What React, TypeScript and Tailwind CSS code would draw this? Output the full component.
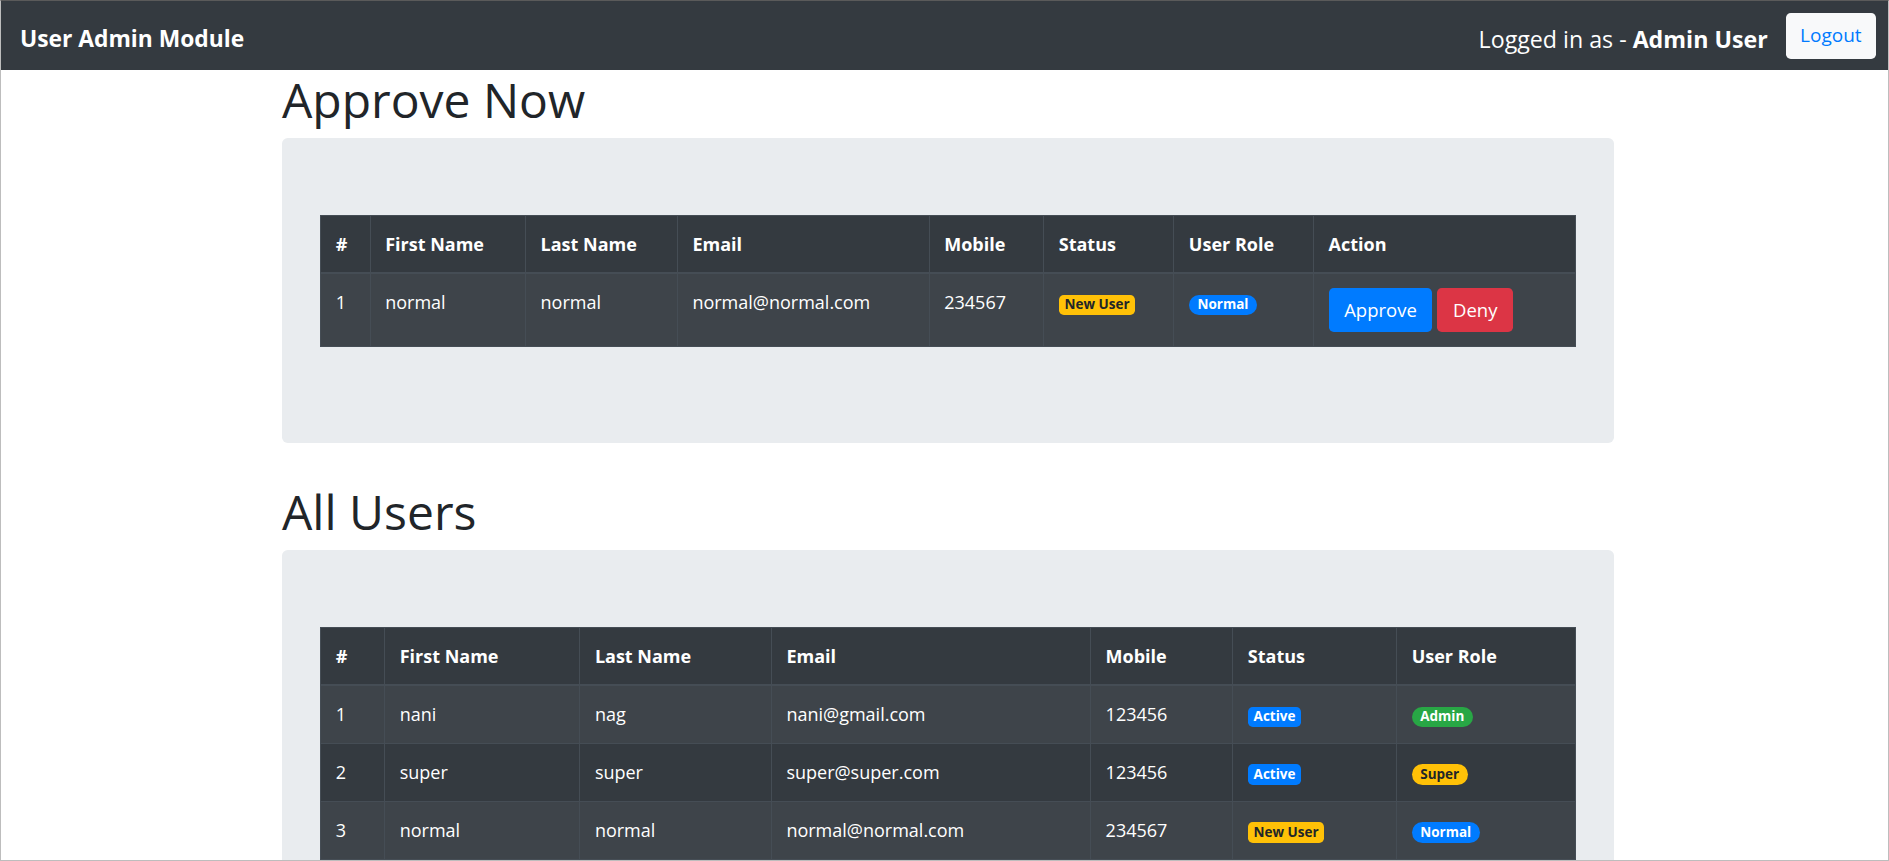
import React from "react";

type Badge = { text: string; cls: string; pill?: boolean };

const newUser: Badge = { text: "New User", cls: "bg-[#ffc107] text-[#212529]" };
const active: Badge = { text: "Active", cls: "bg-[#007bff] text-white" };
const normal: Badge = { text: "Normal", cls: "bg-[#007bff] text-white", pill: true };
const admin: Badge = { text: "Admin", cls: "bg-[#28a745] text-white", pill: true };
const superB: Badge = { text: "Super", cls: "bg-[#ffc107] text-[#212529]", pill: true };

function Pill({ b }: { b: Badge }) {
  return (
    <span
      className={
        "inline-block align-baseline font-bold text-[13.5px] leading-none py-[3.6px] " +
        (b.pill ? "px-[8.6px] rounded-full " : "px-[5.8px] rounded-[4.8px] ") +
        b.cls
      }
    >
      {b.text}
    </span>
  );
}

const th = "text-left font-bold px-[14.4px] pt-[14px] pb-[13.6px] border border-[#454d55] border-b-2 align-bottom leading-[28.8px]";
const td = "text-left px-[14.4px] py-[14px] border border-[#454d55] align-top leading-[28.8px]";

function Heading({ children }: { children: React.ReactNode }) {
  return (
    <h1 className="text-[48px] leading-[57.6px] font-medium text-[#212529] mb-[9.6px] pt-[1px]">{children}</h1>
  );
}

export default function App() {
  const approveCols = [49.4, 155.4, 151.8, 251.8, 114.5, 130.1, 139.7, 261.4];
  const allCols = [63.9, 195.2, 191.5, 319.2, 142.2, 163.8, 178.3];
  const users = [
    { id: 1, first: "nani", last: "nag", email: "nani@gmail.com", mobile: "123456", status: active, role: admin },
    { id: 2, first: "super", last: "super", email: "super@super.com", mobile: "123456", status: active, role: superB },
    { id: 3, first: "normal", last: "normal", email: "normal@normal.com", mobile: "234567", status: newUser, role: normal },
  ];

  return (
    <div className="h-[861px] overflow-hidden border border-[#bdbdbd] border-t-[#5a5a5a] bg-white font-['Open_Sans',sans-serif] text-[18px] leading-[28.8px] text-[#212529]">
      <nav className="h-[69px] bg-[#343a40] flex items-center justify-between pl-[19px] pr-[12px]">
        <div className="text-white font-bold text-[22.8px] leading-[36px] pt-[6px]">User Admin Module</div>
        <div className="flex items-center">
          <span className="text-white text-[23.2px] leading-[36px] pt-[6px]">
            Logged in as - <span className="font-bold">Admin User</span>
          </span>
          <button className="ml-[18px] h-[46px] px-[14.4px] rounded-[4.8px] bg-[#f8f9fa] text-[#007bff] text-[19px]">
            Logout
          </button>
        </div>
      </nav>

      <div className="w-[1332px] ml-[281px]">
        <Heading>Approve Now</Heading>
        <div className="bg-[#e9ecef] rounded-[5.76px] px-[38.4px] py-[76.8px] mb-[38.4px]">
          <table className="w-full table-fixed border-collapse bg-[#343a40] text-white mb-[19.2px]">
            <colgroup>
              {approveCols.map((w, i) => (
                <col key={i} style={{ width: w }} />
              ))}
            </colgroup>
            <thead>
              <tr>
                {["#", "First Name", "Last Name", "Email", "Mobile", "Status", "User Role", "Action"].map((h) => (
                  <th key={h} className={th}>{h}</th>
                ))}
              </tr>
            </thead>
            <tbody>
              <tr className="bg-[#3e444a]">
                <td className={td}>1</td>
                <td className={td}>normal</td>
                <td className={td}>normal</td>
                <td className={td}>normal@normal.com</td>
                <td className={td}>234567</td>
                <td className={td}><Pill b={newUser} /></td>
                <td className={td}><Pill b={normal} /></td>
                <td className={td}>
                  <div className="flex gap-[5px]">
                    <button className="h-[44px] px-[15.6px] rounded-[4.8px] bg-[#007bff] text-white text-[18.5px]">Approve</button>
                    <button className="h-[44px] px-[15.6px] rounded-[4.8px] bg-[#dc3545] text-white text-[18.5px]">Deny</button>
                  </div>
                </td>
              </tr>
            </tbody>
          </table>
        </div>

        <Heading>All Users</Heading>
        <div className="bg-[#e9ecef] rounded-[5.76px] px-[38.4px] py-[76.8px] mb-[38.4px]">
          <table className="w-full table-fixed border-collapse bg-[#343a40] text-white mb-[19.2px]">
            <colgroup>
              {allCols.map((w, i) => (
                <col key={i} style={{ width: w }} />
              ))}
            </colgroup>
            <thead>
              <tr>
                {["#", "First Name", "Last Name", "Email", "Mobile", "Status", "User Role"].map((h) => (
                  <th key={h} className={th}>{h}</th>
                ))}
              </tr>
            </thead>
            <tbody>
              {users.map((u, i) => (
                <tr key={u.id} className={i % 2 === 0 ? "bg-[#3e444a]" : ""}>
                  <td className={td}>{u.id}</td>
                  <td className={td}>{u.first}</td>
                  <td className={td}>{u.last}</td>
                  <td className={td}>{u.email}</td>
                  <td className={td}>{u.mobile}</td>
                  <td className={td}><Pill b={u.status} /></td>
                  <td className={td}><Pill b={u.role} /></td>
                </tr>
              ))}
            </tbody>
          </table>
        </div>
      </div>
    </div>
  );
}
